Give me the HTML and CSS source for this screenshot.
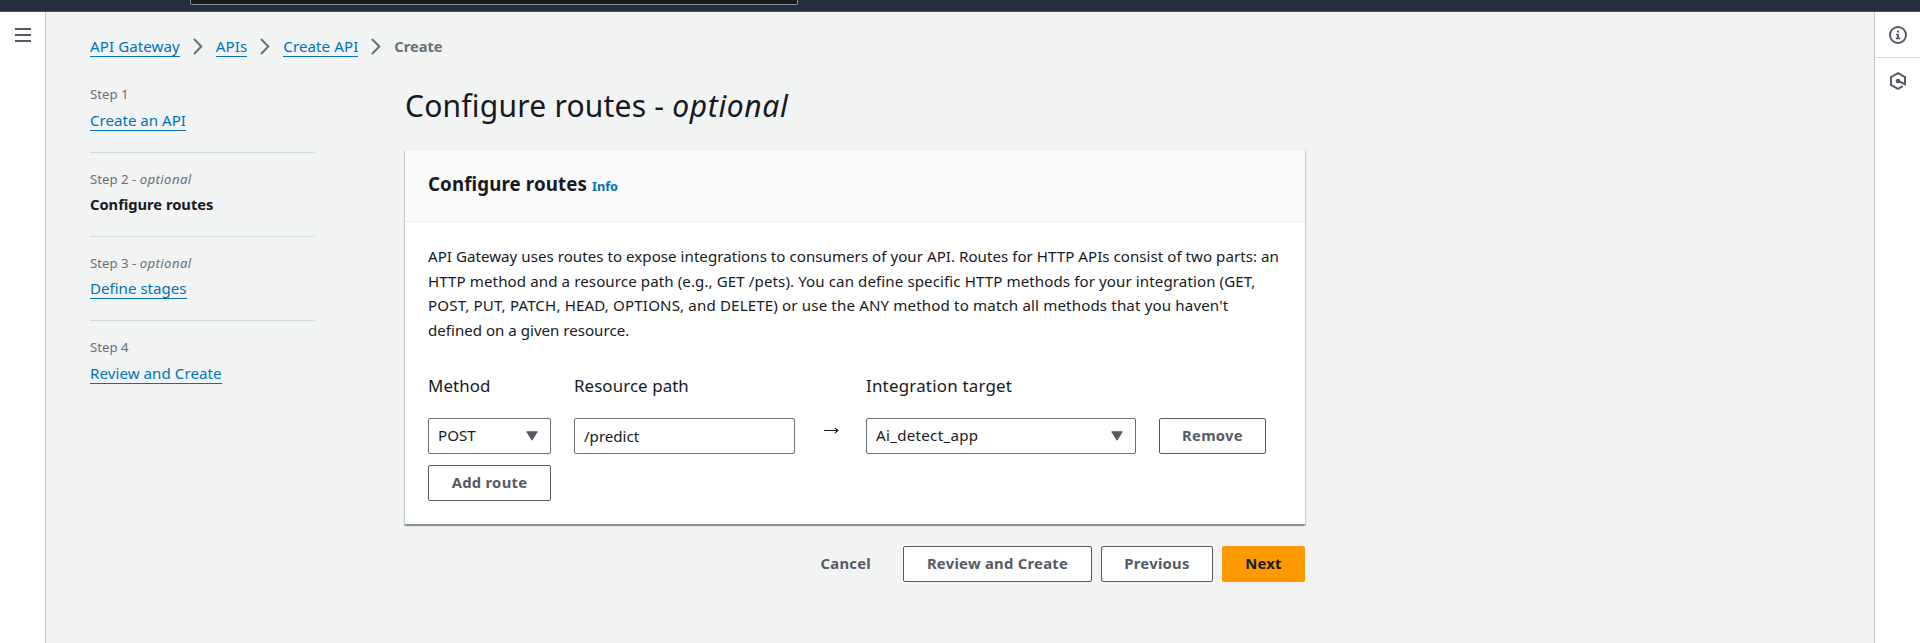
FILE: index.html
```html
<!DOCTYPE html>
<html lang="en">
<head>
<meta charset="utf-8">
<title>API Gateway - Create API</title>
<link rel="stylesheet" href="styles.css">
</head>
<body>
<header class="topbar"><div class="search"></div></header>
<div class="shell">
  <aside class="rail rail-left">
    <svg class="menu" width="16" height="14" viewBox="0 0 16 14"><path d="M0 1h16M0 7h16M0 13h16" stroke="#545b64" stroke-width="2"/></svg>
  </aside>
  <main class="main">
    <nav class="crumbs">
      <a class="link">API Gateway</a>
      <svg class="chev" width="10" height="17" viewBox="0 0 10 17"><path d="M1 1l7.3 7.5L1 16"/></svg>
      <a class="link">APIs</a>
      <svg class="chev" width="10" height="17" viewBox="0 0 10 17"><path d="M1 1l7.3 7.5L1 16"/></svg>
      <a class="link">Create API</a>
      <svg class="chev" width="10" height="17" viewBox="0 0 10 17"><path d="M1 1l7.3 7.5L1 16"/></svg>
      <span class="current">Create</span>
    </nav>
    <div class="columns">
      <ol class="steps">
        <li class="step"><div class="label">Step 1</div><a class="link">Create an API</a></li>
        <li class="step"><div class="label">Step 2 - <i>optional</i></div><b class="active">Configure routes</b></li>
        <li class="step"><div class="label">Step 3 - <i>optional</i></div><a class="link">Define stages</a></li>
        <li class="step"><div class="label">Step 4</div><a class="link last">Review and Create</a></li>
      </ol>
      <div class="content">
        <h1 class="title">Configure routes - <i>optional</i></h1>
        <section class="card">
          <div class="card-head"><h2 class="card-title">Configure routes</h2><a class="info">Info</a></div>
          <div class="card-body">
            <p class="text"><span class="line-a">API Gateway uses routes to expose integrations to consumers of your API. Routes for HTTP APIs consist of two parts: an</span><br><span class="line-b">HTTP method and a resource path (e.g., GET /pets). You can define specific HTTP methods for your integration (GET,</span><br><span class="line-c">POST, PUT, PATCH, HEAD, OPTIONS, and DELETE) or use the ANY method to match all methods that you haven't</span><br>defined on a given resource.</p>
            <div class="grid">
              <div class="field-label">Method</div>
              <div class="field-label">Resource path</div>
              <div></div>
              <div class="field-label wide">Integration target</div>
              <div></div>
              <div class="box">POST<svg class="caret" width="12" height="10" viewBox="0 0 12 10"><path d="M.8.8h10.4L6 9.2z"/></svg></div>
              <div class="box input">/predict</div>
              <svg class="arrow" width="15" height="7" viewBox="0 0 15 7"><path d="M0 3.5h14M10.8.8l3.2 2.7-3.2 2.7"/></svg>
              <div class="box target">Ai_detect_app<svg class="caret" width="12" height="10" viewBox="0 0 12 10"><path d="M.8.8h10.4L6 9.2z"/></svg></div>
              <div class="btn">Remove</div>
            </div>
            <div class="btn add">Add route</div>
          </div>
        </section>
        <div class="actions">
          <div class="btn plain">Cancel</div>
          <div class="btn review">Review and Create</div>
          <div class="btn prev">Previous</div>
          <div class="btn primary">Next</div>
        </div>
      </div>
    </div>
  </main>
  <aside class="rail rail-right">
    <div class="tool">
      <svg width="18" height="18" viewBox="0 0 18 18"><circle cx="9" cy="9" r="8" fill="none" stroke="#545b64" stroke-width="2"/><path d="M8 4.5h2v2H8zM7 7.7h3v3.8h1.2v1.7H6.8v-1.7H8V9.2H7z" fill="#545b64"/></svg>
    </div>
    <div class="tool tool-hex">
      <svg width="18" height="18" viewBox="0 0 18 18"><path d="M9 9l7 3.2V5L9 1.2 2 5v8l7 3.8 4.8-2.6" fill="none" stroke="#545b64" stroke-width="2"/><circle cx="9" cy="9" r="2.3" fill="#545b64"/></svg>
    </div>
  </aside>
</div>
</body>
</html>
```
FILE: styles.css
```css
* { box-sizing: border-box; }
body { margin: 0; height: 643px; overflow: hidden; background: #f2f3f3; color: #16191f; font: 15.1px/24px "Noto Sans", sans-serif; }
.topbar { height: 12px; background: #232f3e; border-bottom: 1px solid #4b5560; padding-left: 190px; }
.search { width: 608px; height: 5px; background: #161b20; border: 1px solid #87919a; border-top: 0; border-radius: 0 0 2px 2px; }
.shell { display: flex; height: 631px; }
.rail { background: #fff; flex: none; }
.rail-left { width: 46px; border-right: 1px solid #c4c8c8; padding: 16px 0 0 15px; }
.menu { display: block; }
.rail-right { width: 46px; border-left: 1px solid #c4c8c8; }
.tool { height: 46px; display: flex; justify-content: center; align-items: center; border-bottom: 1px solid #d5dbdb; }
.tool-hex { border: 0; }
.main { flex: 1; padding: 22px 0 0 44px; }
.crumbs { display: flex; align-items: flex-start; height: 26px; white-space: nowrap; }
.link { display: inline-block; color: #0073bb; border-bottom: 1px solid #0073bb; height: 23px; line-height: 24px; white-space: nowrap; }
.crumbs .link { letter-spacing: .08px; }
.chev { margin: 4px 13px 0; fill: none; stroke: #687078; stroke-width: 2; }
.current { font-weight: 700; color: #687078; font-size: 14.6px; line-height: 24px; }
.columns { display: flex; }
.steps { list-style: none; margin: 0; padding: 22px 0 0; width: 225px; }
.step { height: 84px; }
.step:not(:last-child)::after { content: ""; display: block; height: 1px; background: #d5dbdb; margin-top: 21px; }
.step .label { font-size: 13.2px; line-height: 24px; color: #687078; }
.step + .step .label { position: relative; top: 1px; }
.label i { letter-spacing: .4px; }
.step .link { display: block; width: max-content; height: 25px; line-height: 28px; }
.step .last { height: 26px; line-height: 30px; letter-spacing: .06px; }
.active { display: block; font-size: 14.7px; height: 25px; line-height: 28px; }
.content { width: 900px; margin-left: 90px; }
.title { margin: 0; padding-top: 26px; height: 90px; font-size: 30px; font-weight: 400; line-height: 40px; letter-spacing: .22px; }
.title i { letter-spacing: .65px; }
.card { height: 375px; background: #fff; box-shadow: 0 1px 1px rgba(0,28,36,.2), 1px 1px 1px rgba(0,28,36,.15), -1px 1px 1px rgba(0,28,36,.15), 0 -1px 0 #eaeded; border-bottom: 1px solid #879596; }
.card-head { height: 72px; background: #fafafa; border-bottom: 1px solid #eaeded; padding: 20px 23px; display: flex; align-items: baseline; gap: 5px; }
.card-title { margin: 0; font-size: 18.7px; line-height: 28px; font-weight: 700; letter-spacing: .12px; }
.info { color: #0073bb; font-weight: 700; font-size: 12.7px; }
.card-body { padding: 22px 23px 0; }
.text { margin: 0; line-height: 24.5px; white-space: nowrap; }
.line-a { letter-spacing: .035px; }
.line-b { letter-spacing: .095px; }
.line-c { letter-spacing: .145px; }
.grid { display: grid; grid-template-columns: 123px 221px 25px 270px 107px; column-gap: 23px; grid-template-rows: 42px 36px; row-gap: 13px; padding-top: 21px; }
.field-label { font-size: 16.9px; line-height: 45px; letter-spacing: .08px; white-space: nowrap; }
.wide { letter-spacing: .22px; }
.box { border: 1px solid #687078; border-radius: 2px; background: #fff; height: 36px; padding: 0 12px 0 9px; display: flex; align-items: center; justify-content: space-between; line-height: 32px; padding-bottom: 2px; }
.input { padding-bottom: 0; }
.target { letter-spacing: .3px; }
.caret { fill: #545b64; stroke: #545b64; stroke-linejoin: round; position: relative; top: 1px; }
.arrow { margin: 9px 0 0 6px; fill: none; stroke: #16191f; stroke-width: 1.1; }
.btn { height: 36px; border: 1px solid #545b64; border-radius: 2px; background: #fff; color: #545b64; font-weight: 700; font-size: 14.8px; line-height: 32px; text-align: center; letter-spacing: .27px; white-space: nowrap; }
.add { width: 123px; margin-top: 11px; }
.actions { display: flex; justify-content: flex-end; padding-top: 21px; gap: 9px; }
.plain { border-color: transparent; background: none; margin-right: 22px; }
.review { width: 189px; }
.prev { width: 112px; }
.primary { width: 83px; background: #f90; border-color: #f90; color: #16191f; }
```
